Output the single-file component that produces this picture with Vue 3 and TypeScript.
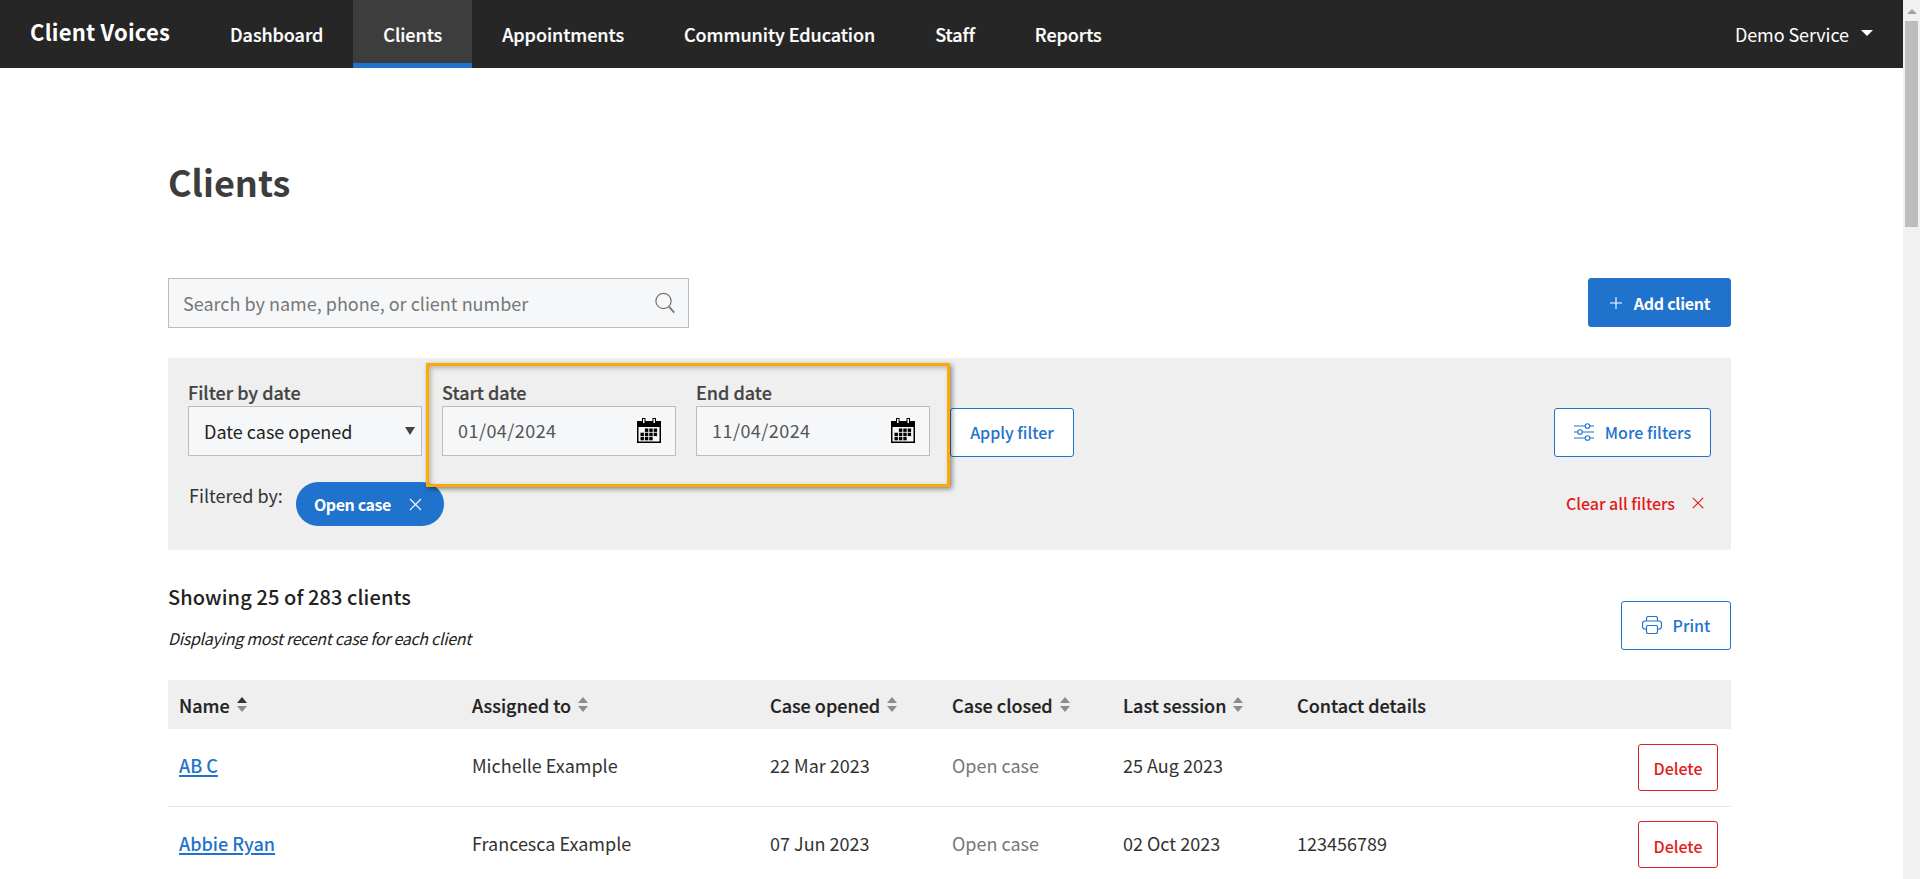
<script setup lang="ts">
interface Col { label: string; sort: boolean; active?: boolean }
interface Row { name: string; staff: string; opened: string; session: string; contact: string }

const links: string[] = ['Dashboard', 'Clients', 'Appointments', 'Community Education', 'Staff', 'Reports']
const cols: Col[] = [
  { label: 'Name', sort: true, active: true },
  { label: 'Assigned to', sort: true },
  { label: 'Case opened', sort: true },
  { label: 'Case closed', sort: true },
  { label: 'Last session', sort: true },
  { label: 'Contact details', sort: false },
  { label: '', sort: false },
]
const rows: Row[] = [
  { name: 'AB C', staff: 'Michelle Example', opened: '22 Mar 2023', session: '25 Aug 2023', contact: '' },
  { name: 'Abbie Ryan', staff: 'Francesca Example', opened: '07 Jun 2023', session: '02 Oct 2023', contact: '123456789' },
]
const dates = [
  { label: 'Start date', value: '01/04/2024' },
  { label: 'End date', value: '11/04/2024' },
]
const calCells: number[][] = [
  [1, 0], [2, 0], [3, 0], [0, 1], [1, 1], [2, 1], [3, 1], [0, 2], [1, 2], [2, 2],
]
</script>

<template>
  <div class="shell">
    <div class="page">
      <header class="nav">
        <a class="brand">Client Voices</a>
        <nav class="links">
          <a v-for="l in links" :key="l" class="link" :class="{ active: l === 'Clients' }">{{ l }}</a>
        </nav>
        <div class="account">
          <span>Demo Service</span>
          <i class="caret"></i>
        </div>
      </header>

      <main class="main">
        <h1 class="title">Clients</h1>

        <div class="toolbar">
          <div class="search">
            <span>Search by name, phone, or client number</span>
            <svg width="22" height="22" viewBox="0 0 22 22" fill="none" stroke="#777" stroke-width="1.3">
              <circle cx="9.5" cy="9" r="7.6" />
              <path d="M15 14.6l5.2 6" stroke-width="1.8" />
            </svg>
          </div>
          <button class="btn solid">
            <svg width="12" height="12" viewBox="0 0 12 12" stroke="#fff" stroke-width="1.1"><path d="M6 0v12M0 6h12" /></svg>
            <span>Add client</span>
          </button>
        </div>

        <section class="panel">
          <div class="filters">
            <div class="field">
              <label>Filter by date</label>
              <div class="box select">
                <span>Date case opened</span>
                <i class="down"></i>
              </div>
            </div>
            <div v-for="d in dates" :key="d.label" class="field">
              <label>{{ d.label }}</label>
              <div class="box date">
                <span>{{ d.value }}</span>
                <svg width="24" height="25" viewBox="0 0 24 25">
                  <path d="M0 3h24v22H0z" fill="#000" />
                  <path d="M1.5 9h21v14.500h-21z" fill="#f6f7f9" />
                  <path d="M5 0h3.500v6H5zM15.500 0H19v6h-3.500z" fill="#000" />
                  <path d="M6 1h1.500v4H6zM16.500 1H18v4h-1.500z" fill="#f6f7f9" />
                  <rect v-for="(c, i) in calCells" :key="i" :x="3.5 + c[0] * 4.4" :y="10.5 + c[1] * 4.2" width="3.400" height="3.400" fill="#000" />
                </svg>
              </div>
            </div>
            <button class="btn outline apply">Apply filter</button>
            <button class="btn outline more">
              <svg width="20" height="18" viewBox="0 0 20 18" fill="none" stroke="#1f73cc" stroke-width="1.100">
                <path d="M0 3h11M16 3h4M0 9h3.500M8.500 9H20M0 15h11M16 15h4" />
                <circle cx="13.500" cy="3" r="2.300" /><circle cx="6" cy="9" r="2.300" /><circle cx="13.500" cy="15" r="2.300" />
              </svg>
              <span>More filters</span>
            </button>
          </div>
          <div class="applied">
            <span class="by">Filtered by:</span>
            <span class="pill">
              <span>Open case</span>
              <svg width="13" height="13" viewBox="0 0 13 13" stroke="#fff" stroke-width="1.100"><path d="M1 1l11 11M12 1L1 12" /></svg>
            </span>
            <a class="clear">
              <span>Clear all filters</span>
              <svg width="12" height="12" viewBox="0 0 12 12" stroke="#e31b1b" stroke-width="1.200"><path d="M.8.8l10.400 10.400M11.200.8L.8 11.200" /></svg>
            </a>
          </div>
          <div class="highlight"></div>
        </section>

        <div class="summary">
          <div>
            <h2 class="count">Showing 25 of 283 clients</h2>
            <p class="note">Displaying most recent case for each client</p>
          </div>
          <button class="btn outline print">
            <svg width="20" height="18" viewBox="0 0 20 18" fill="none" stroke="#1f73cc" stroke-width="1.200">
              <path d="M4.500 5V2.500a2 2 0 0 1 2-2h7a2 2 0 0 1 2 2V5" />
              <path d="M4.500 13H3a2.500 2.500 0 0 1-2.500-2.500V7.500A2.500 2.500 0 0 1 3 5h14a2.500 2.500 0 0 1 2.500 2.500v3A2.500 2.500 0 0 1 17 13h-1.500" />
              <rect x="4.500" y="9.500" width="11" height="8" rx="1.500" />
            </svg>
            <span>Print</span>
          </button>
        </div>

        <table class="table">
          <colgroup>
            <col class="c1" /><col class="c2" /><col class="c3" /><col class="c4" /><col class="c5" /><col class="c6" /><col class="c7" />
          </colgroup>
          <thead>
            <tr>
              <th v-for="c in cols" :key="c.label">
                <span class="th">
                  {{ c.label }}
                  <svg v-if="c.sort" width="10" height="15" viewBox="0 0 10 15">
                    <path d="M5 0l5 6H0z" :fill="c.active ? '#333' : '#8c8c8c'" />
                    <path d="M5 15L0 9h10z" fill="#8c8c8c" />
                  </svg>
                </span>
              </th>
            </tr>
          </thead>
          <tbody>
            <tr v-for="r in rows" :key="r.name">
              <td><a class="name">{{ r.name }}</a></td>
              <td>{{ r.staff }}</td>
              <td>{{ r.opened }}</td>
              <td class="muted">Open case</td>
              <td>{{ r.session }}</td>
              <td>{{ r.contact }}</td>
              <td class="action"><button class="btn danger">Delete</button></td>
            </tr>
          </tbody>
        </table>
      </main>
    </div>

    <aside class="scrollbar">
      <i class="up"></i>
      <div class="thumb"></div>
    </aside>
  </div>
</template>

<style>
html, body { margin: 0; height: 100%; overflow: hidden; background: #fff; }
</style>

<style scoped>
.shell {
  display: flex;
  height: 879px;
  overflow: hidden;
  font-family: "Noto Sans CJK SC", "Noto Sans", sans-serif;
  font-size: 18px;
  line-height: 24px;
  color: #222;
}
.page { flex: 1; min-width: 0; }

.nav { display: flex; align-items: stretch; height: 68px; padding: 0 30px; background: #262626; color: #fff; }
.brand { align-self: center; margin: -7px 30px 0 0; font-size: 22px; font-weight: 700; line-height: 30px; letter-spacing: .2px; }
.links { display: flex; }
.link { display: flex; align-items: center; padding: 0 30px; font-weight: 500; letter-spacing: -.05px; -webkit-text-stroke: .2px #fff; box-sizing: border-box; border-bottom: 5px solid transparent; border-top: 5px solid transparent; }
.link.active { background: #3d3d3d; border-bottom-color: #1f73cc; }
.account { display: flex; align-items: center; gap: 12px; margin-left: auto; letter-spacing: -.1px; }
.caret { width: 0; height: 0; margin-top: -2px; border-left: 6px solid transparent; border-right: 6px solid transparent; border-top: 6px solid #fff; }

.main { padding: 0 172px 0 168px; }
.title { margin: 0; padding: 88px 0 72px; font-size: 36px; line-height: 50px; font-weight: 700; color: #3d3d3d; }

.toolbar { display: flex; justify-content: space-between; align-items: flex-start; }
.search { display: flex; align-items: center; justify-content: space-between; box-sizing: border-box; width: 521px; height: 50px; padding: 0 12px 0 14px; background: #f6f7f9; border: 1px solid #bcbcbc; color: #777; }

.btn { display: inline-flex; align-items: center; justify-content: center; box-sizing: border-box; height: 49px; padding: 0 0 2px; border-radius: 3px; font-family: inherit; font-size: 16px; font-weight: 500; line-height: 24px; white-space: nowrap; cursor: pointer; }
.solid { width: 143px; gap: 12px; padding: 0 0 0 1px; background: #1f73cc; border: 1px solid #1f73cc; color: #fff; font-weight: 700; letter-spacing: -.25px; }
.outline { background: #fff; border: 1px solid #1f73cc; color: #1f73cc; }
.apply { width: 124px; margin-top: 28px; }
.more { width: 157px; gap: 11px; margin-top: 28px; margin-left: auto; }
.print { width: 110px; gap: 11px; margin-top: 17px; }
.danger { width: 80px; height: 47px; padding: 2px 0 0; background: #fff; border: 1px solid #e31b1b; color: #e31b1b; }

.panel { position: relative; margin-top: 30px; padding: 22px 20px 25px; height: 192px; box-sizing: border-box; background: #efefef; }
.filters { display: flex; gap: 20px; align-items: flex-start; }
.field { width: 234px; }
.field label { display: block; height: 26px; font-weight: 500; -webkit-text-stroke: .2px #444; color: #444; }
.box { display: flex; align-items: center; justify-content: space-between; box-sizing: border-box; height: 50px; background: #f6f7f9; border: 1px solid #bcbcbc; }
.select { padding: 0 6px 0 15px; color: #222; }
.down { width: 0; height: 0; border-left: 5px solid transparent; border-right: 5px solid transparent; border-top: 8px solid #444; }
.date { padding: 0 14px 2px 15px; color: #555; letter-spacing: .45px; }

.applied { display: flex; align-items: flex-start; margin-top: 25px; }
.by { margin: 1px 13px 0 1px; color: #333; }
.pill { display: inline-flex; align-items: center; gap: 18px; box-sizing: border-box; height: 44px; width: 148px; padding: 0 0 0 18px; border-radius: 22px; background: #1f73cc; color: #fff; font-size: 16px; font-weight: 700; letter-spacing: -.4px; white-space: nowrap; }
.clear { display: inline-flex; align-items: center; gap: 17px; height: 42px; margin-left: auto; margin-right: 7px; color: #e31b1b; font-size: 16px; font-weight: 500; letter-spacing: -.05px; }
.highlight { position: absolute; left: 258px; top: 5px; width: 524px; height: 124px; box-sizing: border-box; border: 3px solid #fcaa08; box-shadow: 2px 2px 5px rgba(0, 0, 0, .45), inset 2px 2px 5px rgba(0, 0, 0, .25); }

.summary { display: flex; justify-content: space-between; align-items: flex-start; margin-top: 34px; height: 96px; }
.count { margin: 0; font-size: 20px; line-height: 26px; font-weight: 500; letter-spacing: .1px; color: #222; }
.note { margin: 17px 0 0; font-size: 16px; line-height: 22px; font-style: italic; letter-spacing: -.3px; color: #222; }

.table { width: 100%; table-layout: fixed; border-collapse: collapse; }
.c1 { width: 293px; } .c2 { width: 298px; } .c3 { width: 182px; } .c4 { width: 171px; } .c5 { width: 174px; } .c6 { width: 342px; } .c7 { width: 103px; }
th { height: 49px; padding: 0 0 0 11px; background: #efefef; text-align: left; font-weight: 500; -webkit-text-stroke: .2px #222; color: #222; }
.th { display: inline-flex; align-items: center; gap: 7px; }
td { height: 77px; padding: 0 0 4px 11px; box-sizing: border-box; border-bottom: 1px solid #e8e8e8; color: #333; }
.name { color: #1f73cc; font-weight: 500; text-decoration: underline; text-decoration-thickness: 2px; text-underline-offset: 2px; }
.muted { color: #777; }
.action { padding: 0 13px 0 0; text-align: right; }

.scrollbar { position: relative; flex: none; width: 17px; background: #f1f1f1; }
.up { position: absolute; left: 4px; top: 9px; width: 0; height: 0; border-left: 5px solid transparent; border-right: 5px solid transparent; border-bottom: 5px solid #a3a3a3; }
.thumb { position: absolute; left: 2px; right: 2px; top: 21px; height: 206px; background: #bdbdbd; }
</style>
